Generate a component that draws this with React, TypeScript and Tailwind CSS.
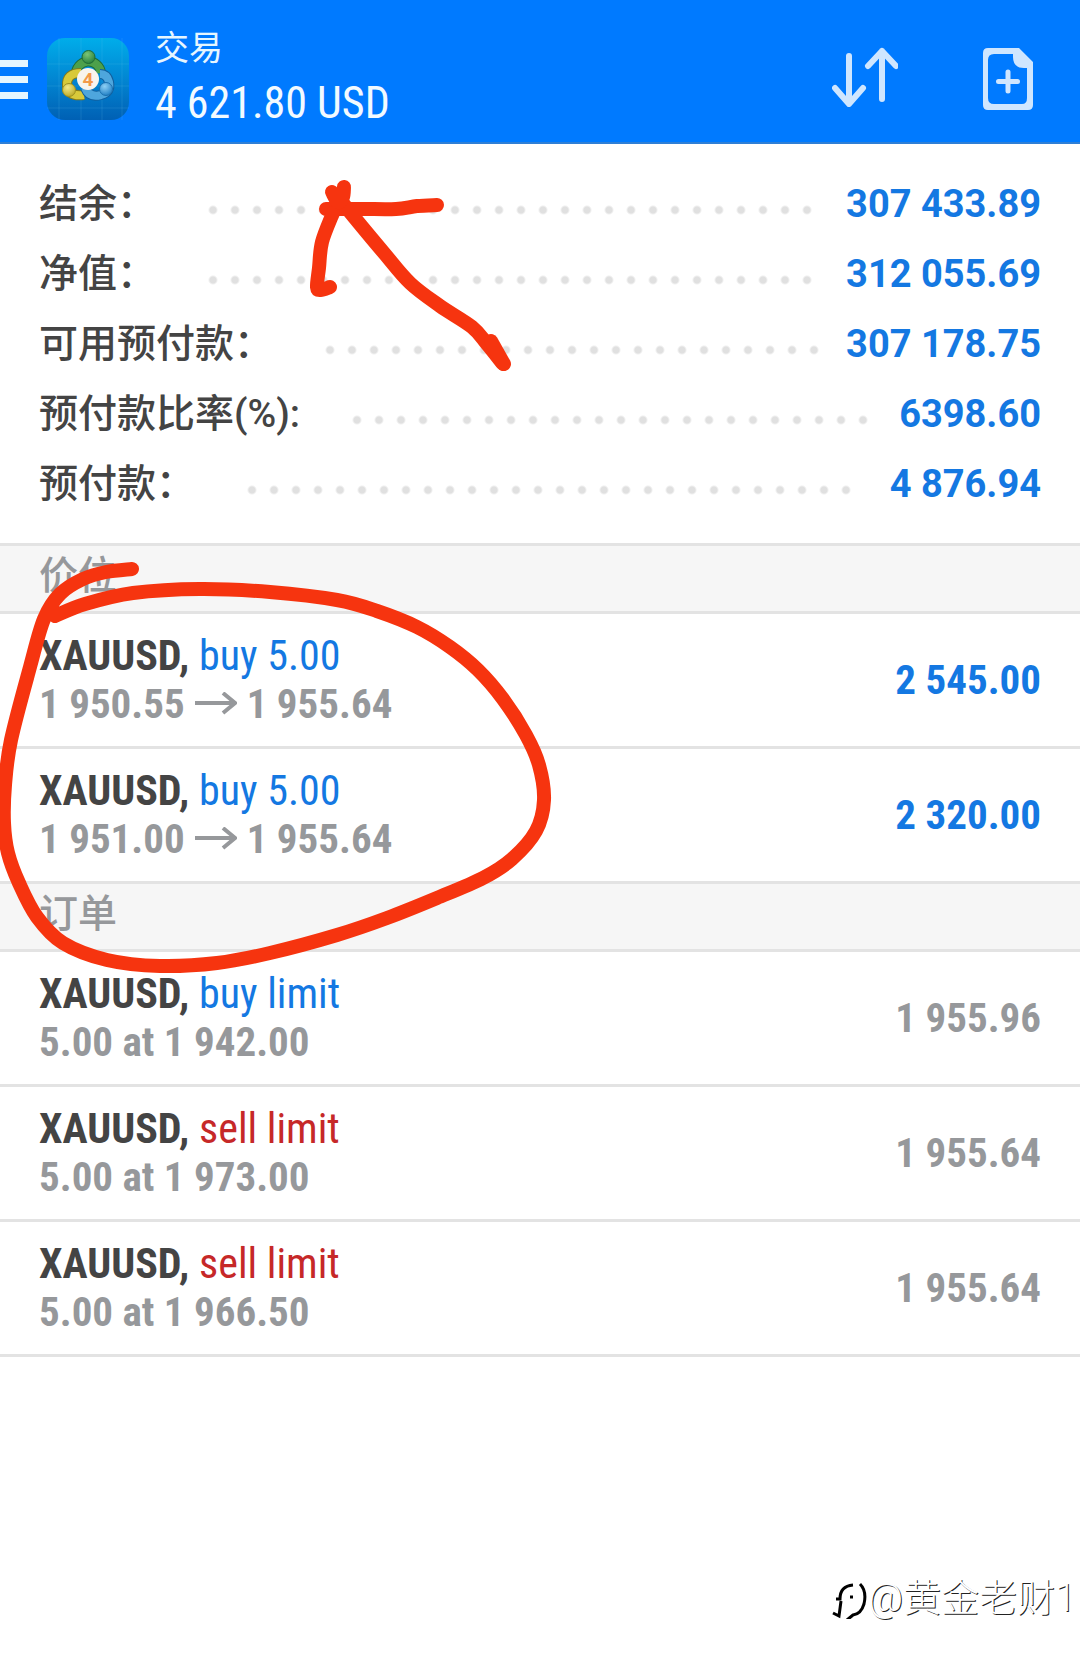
import type { ReactNode } from "react";

type Side = "buy" | "sell";

interface Trade {
  id: number;
  symbol: string;
  side: Side;
  action: string;
  detail: ReactNode;
  value: string;
  profit?: boolean;
}

const BALANCES = [
  { label: "结余：", value: "307 433.89" },
  { label: "净值：", value: "312 055.69" },
  { label: "可用预付款：", value: "307 178.75" },
  { label: "预付款比率(%):", value: "6398.60" },
  { label: "预付款：", value: "4 876.94" },
];

const POSITIONS: Trade[] = [
  {
    id: 1,
    symbol: "XAUUSD",
    side: "buy",
    action: "buy 5.00",
    detail: <PriceMove from="1 950.55" to="1 955.64" />,
    value: "2 545.00",
    profit: true,
  },
  {
    id: 2,
    symbol: "XAUUSD",
    side: "buy",
    action: "buy 5.00",
    detail: <PriceMove from="1 951.00" to="1 955.64" />,
    value: "2 320.00",
    profit: true,
  },
];

const ORDERS: Trade[] = [
  { id: 3, symbol: "XAUUSD", side: "buy", action: "buy limit", detail: "5.00 at 1 942.00", value: "1 955.96" },
  { id: 4, symbol: "XAUUSD", side: "sell", action: "sell limit", detail: "5.00 at 1 973.00", value: "1 955.64" },
  { id: 5, symbol: "XAUUSD", side: "sell", action: "sell limit", detail: "5.00 at 1 966.50", value: "1 955.64" },
];

type Point = [number, number];

const LOOP: Point[] = [
  [132, 569], [106, 572], [83, 579], [60, 594], [44, 619], [30, 667], [11, 740], [5, 785], [4, 823],
  [8, 853], [19, 883], [37, 917], [63, 943], [107, 960], [160, 966], [217, 963], [270, 953], [337, 935],
  [387, 918], [437, 898], [483, 878], [512, 859], [536, 831], [544, 800], [539, 765], [526, 735],
  [503, 699], [478, 670], [450, 647], [417, 627], [377, 611], [337, 600], [270, 592], [200, 589],
  [133, 593], [85, 604], [55, 616],
];
const ARROW_SHAFT: Point[] = [
  [342, 202], [354, 217], [384, 253], [410, 283], [440, 306], [472, 327], [487, 344], [503, 364],
];
const ARROW_RIGHT: Point[] = [[326, 209], [362, 209], [396, 209], [417, 206], [437, 205]];
const ARROW_LEFT: Point[] = [[333, 213], [322, 242], [319, 268], [317, 287], [321, 290], [330, 287]];
const ARROW_TIP: Point[] = [[332, 192], [338, 202], [343, 197], [344, 187]];
const ARROW_TAIL: Point[] = [[491, 341], [504, 364]];

// Catmull-Rom through the recorded pen points
function penPath(points: Point[]) {
  let d = `M${points[0][0]} ${points[0][1]}`;
  for (let i = 0; i < points.length - 1; i++) {
    const p0 = points[i - 1] || points[i];
    const p1 = points[i];
    const p2 = points[i + 1];
    const p3 = points[i + 2] || p2;
    d += ` C${p1[0] + (p2[0] - p0[0]) / 6} ${p1[1] + (p2[1] - p0[1]) / 6}`;
    d += ` ${p2[0] - (p3[0] - p1[0]) / 6} ${p2[1] - (p3[1] - p1[1]) / 6}`;
    d += ` ${p2[0]} ${p2[1]}`;
  }
  return d;
}

function PriceMove({ from, to }: { from: string; to: string }) {
  return (
    <span className="flex items-center gap-2.5">
      {from}
      <svg width="42" height="24" viewBox="0 0 42 24" fill="none" stroke="currentColor" strokeWidth="4">
        <path d="M0 11H40" />
        <path d="M28 1L40 11L28 21" />
      </svg>
      {to}
    </span>
  );
}

function AppLogo() {
  return (
    <svg width="82" height="82" viewBox="0 0 82 82">
      <defs>
        <linearGradient id="tile" x1="0" y1="0" x2="0" y2="1">
          <stop offset="0" stopColor="#00adea" />
          <stop offset="0.5" stopColor="#0286d2" />
          <stop offset="1" stopColor="#0060b4" />
        </linearGradient>
        <radialGradient id="green" cx="0.4" cy="0.3" r="0.8">
          <stop offset="0" stopColor="#7cc576" />
          <stop offset="1" stopColor="#1f7a35" />
        </radialGradient>
        <radialGradient id="yellow" cx="0.4" cy="0.3" r="0.8">
          <stop offset="0" stopColor="#f3e98a" />
          <stop offset="1" stopColor="#b7a41c" />
        </radialGradient>
        <radialGradient id="blue" cx="0.4" cy="0.3" r="0.8">
          <stop offset="0" stopColor="#8ed0f5" />
          <stop offset="1" stopColor="#1577c0" />
        </radialGradient>
      </defs>
      <rect width="82" height="82" rx="18" fill="url(#tile)" />
      <path
        d="M12 0V82M34 0V82M55 0V82M75 0V82M0 26H82M0 48H82M0 70H82"
        stroke="#6fd0f5"
        strokeOpacity="0.16"
        fill="none"
      />
      <g fill="none">
        <path d="M29 37A12.500 12.500 0 1 1 54 35" stroke="#1e6b36" strokeWidth="10" />
        <path d="M29 37A12.500 12.500 0 1 1 54 35" stroke="#4da04b" strokeWidth="8" />
        <path d="M34 35Q19 35 20 48Q22 59 37 57" stroke="#847a1d" strokeWidth="10" />
        <path d="M34 35Q19 35 20 48Q22 59 37 57" stroke="#d8c93a" strokeWidth="8" />
        <path d="M38 50Q42 60 54 57Q64 54 62 44Q60 36 53 36" stroke="#125f9d" strokeWidth="10" />
        <path d="M38 50Q42 60 54 57Q64 54 62 44Q60 36 53 36" stroke="#4ea6dd" strokeWidth="8" />
      </g>
      <circle cx="41.500" cy="19" r="6.500" fill="url(#green)" stroke="#1e6b36" />
      <circle cx="22" cy="52" r="6.500" fill="url(#yellow)" stroke="#9c8f20" />
      <circle cx="59" cy="51" r="6.500" fill="url(#blue)" stroke="#1a6fae" />
      <circle cx="41" cy="41" r="11" fill="#f8f4ee" />
      <text x="41" y="48" textAnchor="middle" fontSize="19" fontWeight="700" fill="#f39a4a" fontFamily="Roboto, sans-serif">
        4
      </text>
    </svg>
  );
}

function Header() {
  return (
    <header className="flex h-36 items-center border-b-2 border-[#2f7fd6] bg-[#007aff] text-white">
      <button aria-label="菜单" className="mt-4 flex w-7 flex-col gap-[9px]">
        <span className="h-[7px] w-full bg-[#e6f6ff]" />
        <span className="h-[7px] w-full bg-[#e6f6ff]" />
        <span className="h-[7px] w-full bg-[#e6f6ff]" />
      </button>
      <div className="mt-4 ml-[19px]">
        <AppLogo />
      </div>
      <div className="mt-4 ml-[26px] flex flex-1 flex-col">
        <h1 className="text-[34px] leading-[48px] text-[#e6f6ff]">交易</h1>
        <p className="font-[Roboto_Condensed,Liberation_Sans_Narrow,Roboto,sans-serif] text-[44px] leading-[62px] text-[#f2faff]">4 621.80 USD</p>
      </div>
      <button aria-label="排序" className="mt-3 mr-[85px]">
        <svg width="66" height="60" viewBox="0 0 66 60" fill="none" stroke="#cfe6ff" strokeWidth="6" strokeLinecap="round" strokeLinejoin="round">
          <path d="M17 9V56M3 41L17 57L31 41" />
          <path d="M50 52V4M36 19L50 4L64 19" />
        </svg>
      </button>
      <button aria-label="新订单" className="mt-4 mr-[47px]">
        <svg width="50" height="62" viewBox="0 0 50 62">
          <path
            d="M5 0H36L50 14V57Q50 62 45 62H5Q0 62 0 57V5Q0 0 5 0ZM11 6Q5 6 5 12V50Q5 56 11 56H39Q44 56 44 50V20H41Q30 20 30 9V6Z"
            fill="#cfe6ff"
            fillRule="evenodd"
          />
          <path d="M25 24V43M15.500 33.500H34.500" stroke="#cfe6ff" strokeWidth="5" strokeLinecap="round" />
        </svg>
      </button>
    </header>
  );
}

function BalanceList() {
  return (
    <dl className="px-[39px] pt-[25px] pb-6">
      {BALANCES.map((row) => (
        <div key={row.label} className="flex h-[70px] items-center text-[39px]">
          <dt className="font-medium whitespace-nowrap text-[#444]">{row.label}</dt>
          <div className="mt-3 mr-3 ml-[46px] flex-1">
            <div className="h-[22px] w-[round(down,100%,22px)] bg-[radial-gradient(circle,#e0e0e0_3px,transparent_5px)] bg-[length:22px_22px]" />
          </div>
          <dd className="text-[38px] font-bold text-[#1478e2]">{row.value}</dd>
        </div>
      ))}
    </dl>
  );
}

function TradeSection({ title, trades }: { title: string; trades: Trade[] }) {
  return (
    <section>
      <h2 className="flex h-[68px] items-center border-b-3 border-[#e3e3e3] bg-[#f6f6f6] px-[39px] pb-1 text-[39px] font-medium text-[#96989b]">
        {title}
      </h2>
      <ul className="font-[Roboto_Condensed,Liberation_Sans_Narrow,Roboto,sans-serif]">
        {trades.map((trade) => (
          <li
            key={trade.id}
            className="flex items-center justify-between border-b-3 border-[#e3e3e3] px-[39px] py-[18px] text-[41px] leading-[48px] font-bold"
          >
            <div>
              <p className="text-[42px] text-[#444]">
                {trade.symbol},{" "}
                <span className={trade.side === "buy" ? "font-normal text-[#1478e2]" : "font-normal text-[#c62828]"}>
                  {trade.action}
                </span>
              </p>
              <div className="text-[#96989b]">{trade.detail}</div>
            </div>
            <span className={trade.profit ? "text-[#1478e2]" : "text-[#96989b]"}>{trade.value}</span>
          </li>
        ))}
      </ul>
    </section>
  );
}

function PenMarks() {
  return (
    <svg
      className="pointer-events-none absolute top-0 left-0"
      width="560"
      height="980"
      viewBox="0 0 560 980"
      fill="none"
      stroke="#f6340f"
      strokeWidth="14"
      strokeLinecap="round"
      strokeLinejoin="round"
    >
      <path d={penPath(LOOP)} />
      <path d={penPath(ARROW_SHAFT)} />
      <path d={penPath(ARROW_RIGHT)} />
      <path d={penPath(ARROW_LEFT)} />
      <path d={penPath(ARROW_TIP)} />
      <path d={penPath(ARROW_TAIL)} />
    </svg>
  );
}

function Watermark() {
  return (
    <div className="absolute right-1 bottom-9 flex items-center">
      <svg width="36" height="42" viewBox="0 0 36 42" fill="none" stroke="#000" strokeWidth="3">
        <path d="M1 36L7 39L9 24M4 22H8Q8 9 21 8" />
        <path d="M28 7Q35 14 32 27Q29 37 21 38L15 43" />
        <path d="M18 20H21" />
      </svg>
      <span className="text-[38px] leading-[50px] font-light text-white [text-shadow:1px_1px_0_#222]">@黄金老财1</span>
    </div>
  );
}

export default function App() {
  return (
    <div className="relative min-h-screen overflow-hidden bg-white font-[Roboto,Noto_Sans_CJK_SC,sans-serif]">
      <Header />
      <main>
        <BalanceList />
        <div className="border-t-3 border-[#e3e3e3]">
          <TradeSection title="价位" trades={POSITIONS} />
          <TradeSection title="订单" trades={ORDERS} />
        </div>
      </main>
      <PenMarks />
      <Watermark />
    </div>
  );
}
